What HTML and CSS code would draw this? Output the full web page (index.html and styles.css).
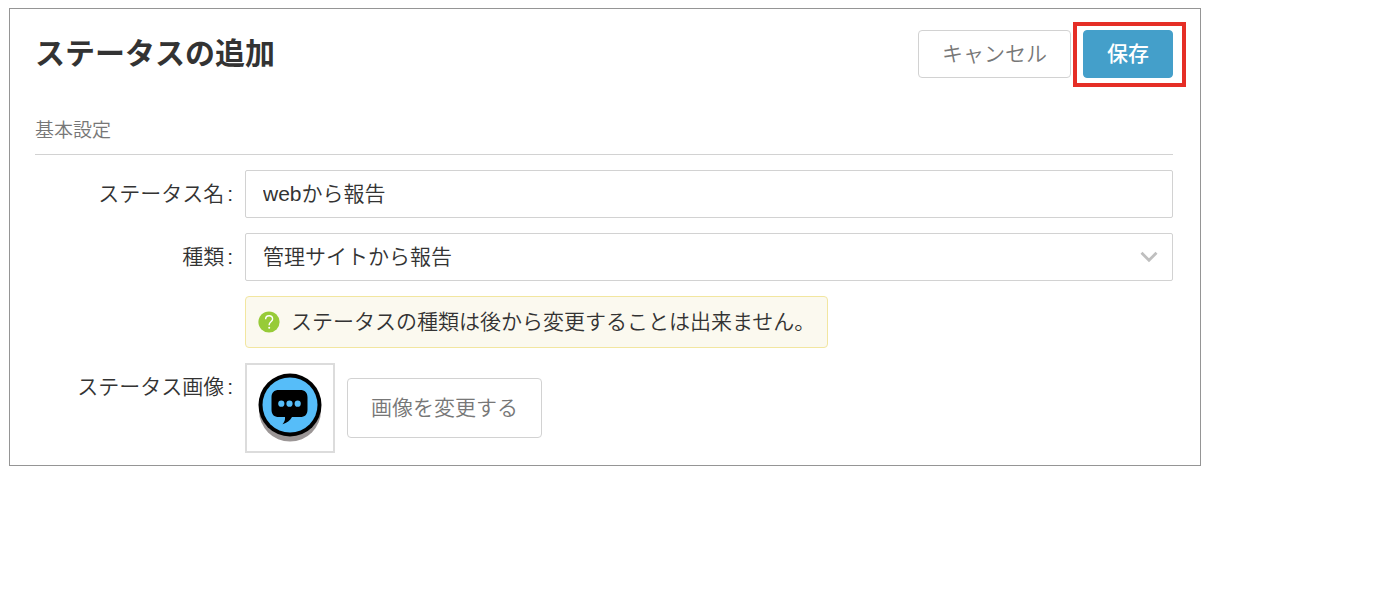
FILE: index.html
```html
<!DOCTYPE html>
<html lang="ja">
<head>
<meta charset="utf-8">
<meta name="viewport" content="width=device-width, initial-scale=1">
<title>ステータスの追加</title>
<link rel="stylesheet" href="styles.css">
</head>
<body>
<main class="page">
  <form class="panel">
    <header class="header">
      <h1 class="title">ステータスの追加</h1>
      <div class="actions">
        <button class="btn" type="button">キャンセル</button>
        <span class="highlight"><button class="btn btn-primary" type="submit">保存</button></span>
      </div>
    </header>
    <h2 class="section-title">基本設定</h2>
    <div class="fields">
      <label class="label" for="name">ステータス名<span class="colon">:</span></label>
      <input class="control control-text" id="name" type="text" value="webから報告">

      <label class="label" for="kind">種類<span class="colon">:</span></label>
      <div class="select-wrap">
        <select class="control" id="kind">
          <option>管理サイトから報告</option>
        </select>
        <svg class="chevron" viewBox="0 0 18 12" aria-hidden="true"><path d="M1.500 1.800 9 9.300l7.500-7.500" fill="none" stroke="#bfbfbf" stroke-width="2.800"/></svg>
      </div>

      <p class="notice">
        <svg class="notice-icon" viewBox="0 0 22 22" aria-hidden="true">
          <circle cx="11" cy="11" r="10.600" fill="#97cb38"/>
          <path d="M7.600 8.300C7.600 6 9 4.700 11.100 4.700s3.500 1.300 3.500 3.200c0 2.700-3.400 3-3.400 5.700v.700" fill="none" stroke="#fff" stroke-width="1.400"/>
          <circle cx="11.200" cy="16.700" r="1" fill="#fff"/>
        </svg>
        <span>ステータスの種類は後から変更することは出来ません。</span>
      </p>

      <label class="label" for="change-image">ステータス画像<span class="colon">:</span></label>
      <div class="image-row">
        <div class="thumb">
          <svg class="thumb-icon" viewBox="0 0 64 70" role="img" aria-label="吹き出し">
            <circle cx="32" cy="37.500" r="31" fill="#9b9696"/>
            <circle cx="32" cy="32" r="31.500" fill="#000"/>
            <circle cx="32" cy="32" r="27.500" fill="#56bdf9"/>
            <path d="M21 17h21c5 0 7.500 2.500 7.500 7.500v12c0 5-2.500 7.500-7.500 7.500h-8c-2 3.500-5 6-9.500 7.200 2-2.200 2.800-4.500 2.500-7.200H21c-5 0-7.500-2.500-7.500-7.500v-12c0-5 2.500-7.500 7.500-7.500z" fill="#000"/>
            <g fill="#56bdf9"><circle cx="23.300" cy="30.700" r="3.100"/><circle cx="31.500" cy="30.700" r="3.100"/><circle cx="39.700" cy="30.700" r="3.100"/></g>
          </svg>
        </div>
        <button class="btn btn-tall" id="change-image" type="button">画像を変更する</button>
      </div>
    </div>
  </form>
</main>
</body>
</html>
```
FILE: styles.css
```css
* {
  box-sizing: border-box;
}

body {
  margin: 0;
  background: #fff;
  color: #333;
  font: 350 21px/30px "Liberation Sans", "Noto Sans CJK JP", sans-serif;
}

.page {
  padding: 8px 187px 8px 9px;
}

.panel {
  padding: 21px 27px 12px 25px;
  border: 1px solid #959595;
}

.header {
  display: flex;
  align-items: center;
  justify-content: space-between;
}

.title {
  margin: 0;
  font-size: 30px;
  line-height: 48px;
  font-weight: 700;
}

.actions {
  display: flex;
  gap: 12px;
}

.btn {
  display: block;
  height: 48px;
  padding: 0 23px;
  border: 1px solid #d2d2d2;
  border-radius: 4px;
  background: #fff;
  color: #777;
  font: inherit;
  white-space: nowrap;
}

.btn-primary {
  border-color: #449fca;
  background: #449fca;
  color: #fff;
  font-weight: 500;
}

.btn-tall {
  height: 60px;
}

.highlight {
  position: relative;
}

.highlight::after {
  content: "";
  position: absolute;
  inset: -8px -13px -9px -10px;
  border: 4px solid #e52e26;
  pointer-events: none;
}

.section-title {
  margin: 38px 0 15px;
  padding-bottom: 8px;
  border-bottom: 1px solid #d2d2d2;
  color: #777;
  font-size: 19px;
  font-weight: 350;
}

.fields {
  display: grid;
  grid-template-columns: 200px minmax(0, 1fr);
  column-gap: 10px;
  row-gap: 15px;
}

.label {
  padding: 9px 2px 0 0;
  text-align: right;
}

.colon {
  margin-left: 3px;
}

.control {
  display: block;
  width: 100%;
  height: 48px;
  padding: 0 17px;
  border: 1px solid #d2d2d2;
  border-radius: 2px;
  background: #fff;
  color: #333;
  font: inherit;
  appearance: none;
}

.control-text {
  padding-bottom: 4px;
}

.select-wrap {
  position: relative;
}

.chevron {
  position: absolute;
  top: 18px;
  right: 15px;
  width: 18px;
  height: 12px;
  pointer-events: none;
}

.notice {
  grid-column: 2;
  justify-self: start;
  display: flex;
  align-items: center;
  gap: 11px;
  margin: 0;
  padding: 10px 12px;
  border: 1px solid #f2e6a0;
  border-radius: 4px;
  background: #fbf9ef;
}

.notice-icon {
  flex: none;
  width: 22px;
  height: 22px;
}

.image-row {
  display: flex;
  align-items: center;
  gap: 12px;
}

.thumb {
  display: grid;
  place-items: center;
  width: 90px;
  height: 90px;
  border: 2px solid #dcdcdc;
}

.thumb-icon {
  width: 64px;
  height: 70px;
}
```
